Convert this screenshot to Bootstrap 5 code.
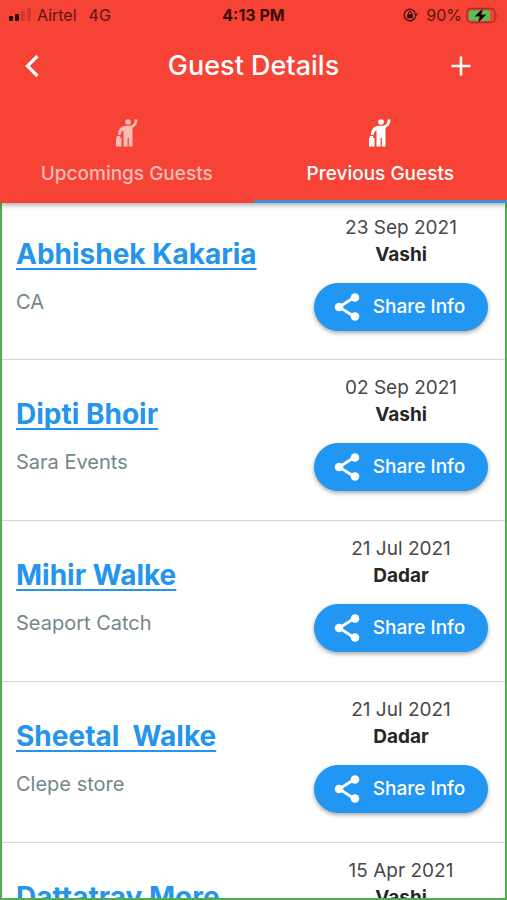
<!DOCTYPE html>
<html lang="en">
<head>
<meta charset="utf-8">
<meta name="viewport" content="width=device-width, initial-scale=1">
<title>Guest Details</title>
<link href="https://cdn.jsdelivr.net/npm/bootstrap@5.3.0/dist/css/bootstrap.min.css" rel="stylesheet">
<style>
body { font-family: Inter, "Liberation Sans", sans-serif; }
.screen { height: 100vh; }
.app-header { background: #f64336; box-shadow: 0 2px 5px rgba(0,0,0,.35); z-index: 1; }
.status-bar { height: 30px; padding: 0 8px; font-size: 16px; line-height: 30px; color: #5a1711; }
.status-side { flex: 1 1 0; }
.clock { color: #3a0c08; }
.title-bar { height: 72px; padding: 0 20px; }
.title-bar h1 { font-size: 27px; line-height: 32px; }
.icon-btn { width: 42px; height: 32px; }
.guest-tab { height: 101px; padding: 17px 0 0; font-size: 19px; line-height: 24px; font-weight: 500; color: #fff; border-bottom: 3px solid transparent; }
.guest-tab svg { margin-bottom: 15px; }
.guest-tab.idle { color: #fcbcb7; }
.guest-tab.current { border-bottom-color: #3c8fdc; }
.guest-list { border: 2px solid #4caf50; border-top: 0; }
.guest-row { height: 161px; flex-shrink: 0; border-bottom: 1px solid #d6d6d6; padding: 0 17px 0 14px; }
.guest-row:first-child { height: 157px; }
.guest-row:first-child .who { padding-top: 35px; }
.guest-row:first-child .visit { padding-top: 11px; }
.who { padding-top: 38px; }
.guest-name { font-size: 28px; line-height: 32px; font-weight: 700; color: #2494ec; text-decoration-thickness: 2px; text-underline-offset: 4px; text-decoration-skip-ink: none; white-space: pre; }
.firm { font-size: 20px; line-height: 24px; margin-top: 20px; color: #75868d; }
.visit { width: 174px; padding-top: 14px; line-height: 27px; font-size: 19px; color: #484848; }
.visit strong { color: #262626; font-weight: 700; }
.share-btn { --bs-btn-bg: #2196f3; --bs-btn-border-color: #2196f3; --bs-btn-color: #fff; --bs-btn-hover-bg: #1e88e5; --bs-btn-hover-color: #fff; height: 48px; margin-top: 15px; padding: 0 4px 0 0; font-size: 19px; font-weight: 500; box-shadow: 0 2px 4px rgba(0,0,0,.35); }
</style>
<script src="https://cdn.jsdelivr.net/npm/bootstrap@5.3.0/dist/js/bootstrap.bundle.min.js" defer></script>
</head>
<body>
<svg class="d-none" aria-hidden="true">
  <symbol id="share" viewBox="0 0 28 30"><path d="M22 5 6 15l16 10" fill="none" stroke="currentColor" stroke-width="2.8"/><g fill="currentColor"><circle cx="22" cy="5.5" r="4.300"/><circle cx="6" cy="15" r="4.300"/><circle cx="22" cy="24.500" r="4.300"/></g></symbol>
  <symbol id="guest" viewBox="0 0 22 28"><g fill="currentColor"><circle cx="12" cy="3" r="2.800"/><path d="M18.700.5H21.500c0 4.200-1.800 6.800-5 8.300V27.500h-3.600V19h-1.300v8.500H7.500V11.500c-1.900.7-2.800 2.400-2.800 4.500H2c0-5.500 3-9.300 8-9.300h4.300c2.900-.4 4.400-2.600 4.400-6.200z"/><path d="M0 19h.8v-2h3.500v2H5.500v8.500H0z"/></g></symbol>
</svg>
<div class="screen d-flex flex-column overflow-hidden">
  <header class="app-header position-relative flex-shrink-0">
    <div class="status-bar d-flex align-items-center">
      <div class="status-side d-flex align-items-center">
        <svg width="25" height="16" viewBox="0 0 25 16" aria-hidden="true"><g fill="#240604"><rect x="1" y="9" width="4" height="5" rx="1"/><rect x="7" y="7" width="4" height="7" rx="1"/></g><g fill="#cf392e"><rect x="13" y="4" width="4" height="10" rx="1"/><rect x="19" y="1" width="4" height="13" rx="1"/></g></svg>
        <span class="ms-1 me-2 pe-1">Airtel</span><span>4G</span>
      </div>
      <span class="clock fw-bold">4:13 PM</span>
      <div class="status-side d-flex align-items-center justify-content-end">
        <svg class="me-2" width="15" height="14" viewBox="0 0 15 14" aria-hidden="true"><path d="M12.600 8.500A5.800 5.800 0 1 1 12.200 4.500" fill="none" stroke="#43100c" stroke-width="1.400"/><path d="m10.500 5.500 4.500 0-2.200 3z" fill="#43100c"/><rect x="4.300" y="6.200" width="5.400" height="4" rx=".6" fill="#240604"/><path d="M5.400 6.500V5.200a1.600 1.600 0 0 1 3.200 0v1.300" fill="none" stroke="#240604"/></svg>
        <span class="me-1">90%</span>
        <svg width="33" height="17" viewBox="0 0 33 17" aria-hidden="true"><rect x="1" y="1.500" width="28" height="14" rx="4" fill="none" stroke="#a52c24" stroke-width="1.300"/><rect x="3" y="3.500" width="21" height="10" rx="2" fill="#4fc559"/><path d="M30.500 6.500c1.600.8 1.600 3.200 0 4z" fill="#a52c24"/><path d="M17 1 8.500 9.500h5L12 16l8.500-8.500h-5z" fill="#160504" stroke="#7d5a35" stroke-width=".6"/></svg>
      </div>
    </div>
    <div class="title-bar d-flex align-items-center justify-content-between">
      <button class="icon-btn btn p-0 border-0 d-flex text-white" type="button" aria-label="Back"><svg width="24" height="32" viewBox="0 0 24 32" aria-hidden="true"><path d="M17.500 6 7.500 16l10 10" fill="none" stroke="currentColor" stroke-width="3.200"/></svg></button>
      <h1 class="m-0 fw-medium text-white">Guest Details</h1>
      <button class="icon-btn btn p-0 border-0 d-flex text-white" type="button" aria-label="Add guest"><svg width="32" height="32" viewBox="0 0 32 32" aria-hidden="true"><path d="M16 6.500v19M6.500 16h19" fill="none" stroke="currentColor" stroke-width="2.600"/></svg></button>
    </div>
    <div class="row g-0" role="tablist">
      <button class="guest-tab idle col btn rounded-0 border-top-0 border-start-0 border-end-0 d-flex flex-column align-items-center" type="button" role="tab" aria-selected="false"><svg width="22" height="28" aria-hidden="true"><use href="#guest"/></svg><span>Upcomings Guests</span></button>
      <button class="guest-tab current col btn rounded-0 border-top-0 border-start-0 border-end-0 d-flex flex-column align-items-center" type="button" role="tab" aria-selected="true"><svg width="22" height="28" aria-hidden="true"><use href="#guest"/></svg><span>Previous Guests</span></button>
    </div>
  </header>
  <main class="guest-list flex-fill overflow-hidden d-flex flex-column">
    <article class="guest-row d-flex justify-content-between"><div class="who"><a class="guest-name d-block" href="#">Abhishek Kakaria</a><div class="firm">CA</div></div><div class="visit d-flex flex-column text-center"><time>23 Sep 2021</time><strong>Vashi</strong><button class="share-btn btn rounded-pill d-flex align-items-center justify-content-center gap-2" type="button"><svg class="me-1" width="28" height="30" aria-hidden="true"><use href="#share"/></svg>Share Info</button></div></article>
    <article class="guest-row d-flex justify-content-between"><div class="who"><a class="guest-name d-block" href="#">Dipti Bhoir</a><div class="firm">Sara Events</div></div><div class="visit d-flex flex-column text-center"><time>02 Sep 2021</time><strong>Vashi</strong><button class="share-btn btn rounded-pill d-flex align-items-center justify-content-center gap-2" type="button"><svg class="me-1" width="28" height="30" aria-hidden="true"><use href="#share"/></svg>Share Info</button></div></article>
    <article class="guest-row d-flex justify-content-between"><div class="who"><a class="guest-name d-block" href="#">Mihir Walke</a><div class="firm">Seaport Catch</div></div><div class="visit d-flex flex-column text-center"><time>21 Jul 2021</time><strong>Dadar</strong><button class="share-btn btn rounded-pill d-flex align-items-center justify-content-center gap-2" type="button"><svg class="me-1" width="28" height="30" aria-hidden="true"><use href="#share"/></svg>Share Info</button></div></article>
    <article class="guest-row d-flex justify-content-between"><div class="who"><a class="guest-name d-block" href="#">Sheetal  Walke</a><div class="firm">Clepe store</div></div><div class="visit d-flex flex-column text-center"><time>21 Jul 2021</time><strong>Dadar</strong><button class="share-btn btn rounded-pill d-flex align-items-center justify-content-center gap-2" type="button"><svg class="me-1" width="28" height="30" aria-hidden="true"><use href="#share"/></svg>Share Info</button></div></article>
    <article class="guest-row d-flex justify-content-between"><div class="who"><a class="guest-name d-block" href="#">Dattatray More</a></div><div class="visit d-flex flex-column text-center"><time>15 Apr 2021</time><strong>Vashi</strong></div></article>
  </main>
</div>
</body>
</html>
